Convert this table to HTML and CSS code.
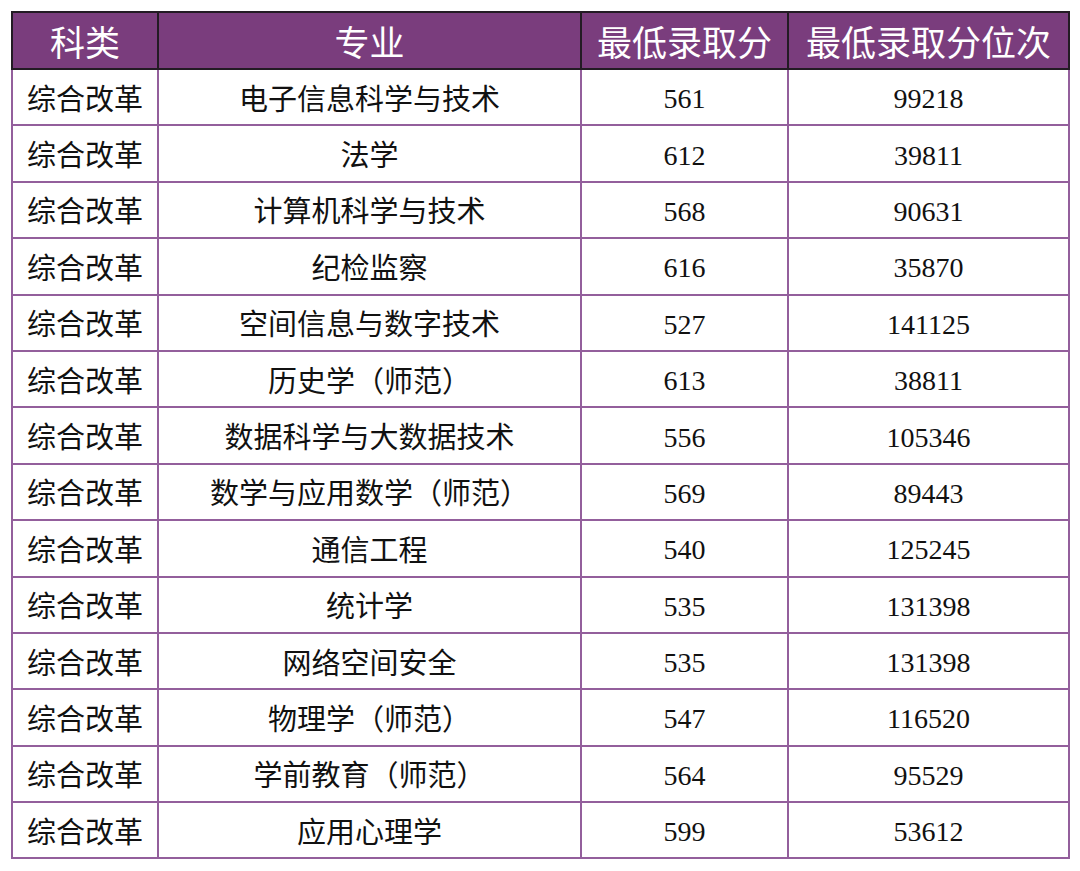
FILE: index.html
```html
<!DOCTYPE html>
<html lang="zh-CN">
<head>
<meta charset="utf-8">
<link rel="stylesheet" href="styles.css">
</head>
<body>
<table class="scores">
  <colgroup>
    <col class="c1"><col class="c2"><col class="c3"><col class="c4">
  </colgroup>
  <thead>
    <tr><th>科类</th><th>专业</th><th>最低录取分</th><th>最低录取分位次</th></tr>
  </thead>
  <tbody>
    <tr><td>综合改革</td><td>电子信息科学与技术</td><td class="num">561</td><td class="num">99218</td></tr>
    <tr><td>综合改革</td><td>法学</td><td class="num">612</td><td class="num">39811</td></tr>
    <tr><td>综合改革</td><td>计算机科学与技术</td><td class="num">568</td><td class="num">90631</td></tr>
    <tr><td>综合改革</td><td>纪检监察</td><td class="num">616</td><td class="num">35870</td></tr>
    <tr><td>综合改革</td><td>空间信息与数字技术</td><td class="num">527</td><td class="num">141125</td></tr>
    <tr><td>综合改革</td><td>历史学（师范）</td><td class="num">613</td><td class="num">38811</td></tr>
    <tr><td>综合改革</td><td>数据科学与大数据技术</td><td class="num">556</td><td class="num">105346</td></tr>
    <tr><td>综合改革</td><td>数学与应用数学（师范）</td><td class="num">569</td><td class="num">89443</td></tr>
    <tr><td>综合改革</td><td>通信工程</td><td class="num">540</td><td class="num">125245</td></tr>
    <tr><td>综合改革</td><td>统计学</td><td class="num">535</td><td class="num">131398</td></tr>
    <tr><td>综合改革</td><td>网络空间安全</td><td class="num">535</td><td class="num">131398</td></tr>
    <tr><td>综合改革</td><td>物理学（师范）</td><td class="num">547</td><td class="num">116520</td></tr>
    <tr><td>综合改革</td><td>学前教育（师范）</td><td class="num">564</td><td class="num">95529</td></tr>
    <tr><td>综合改革</td><td>应用心理学</td><td class="num">599</td><td class="num">53612</td></tr>
  </tbody>
</table>
</body>
</html>
```

FILE: styles.css
```css
html, body {
  margin: 0;
  padding: 0;
  background: #ffffff;
}

.scores {
  margin: 11px 0 0 11px;
  width: 1057px;
  border-collapse: collapse;
  table-layout: fixed;
  font-family: "Liberation Serif", "Noto Sans CJK SC", serif;
  color: #111111;
}

.c1 { width: 146px; }
.c2 { width: 423px; }
.c3 { width: 207px; }
.c4 { width: 281px; }

.scores th {
  height: 55px;
  padding: 0;
  background: #7a3d7d;
  color: #ffffff;
  font-family: "Noto Sans CJK SC", sans-serif;
  font-weight: 400;
  font-size: 35px;
  line-height: 1;
  border: 2px solid #231b24;
  text-align: center;
  vertical-align: middle;
}

.scores td {
  height: 54.4px;
  padding: 0;
  font-family: "Noto Sans CJK SC", sans-serif;
  font-size: 29px;
  line-height: 1;
  border: 2px solid #935f9c;
  text-align: center;
  vertical-align: middle;
}

.scores td.num {
  height: 50.4px;
  padding: 4px 0 0;
  font-family: "Liberation Serif", serif;
  font-size: 28px;
}
```
